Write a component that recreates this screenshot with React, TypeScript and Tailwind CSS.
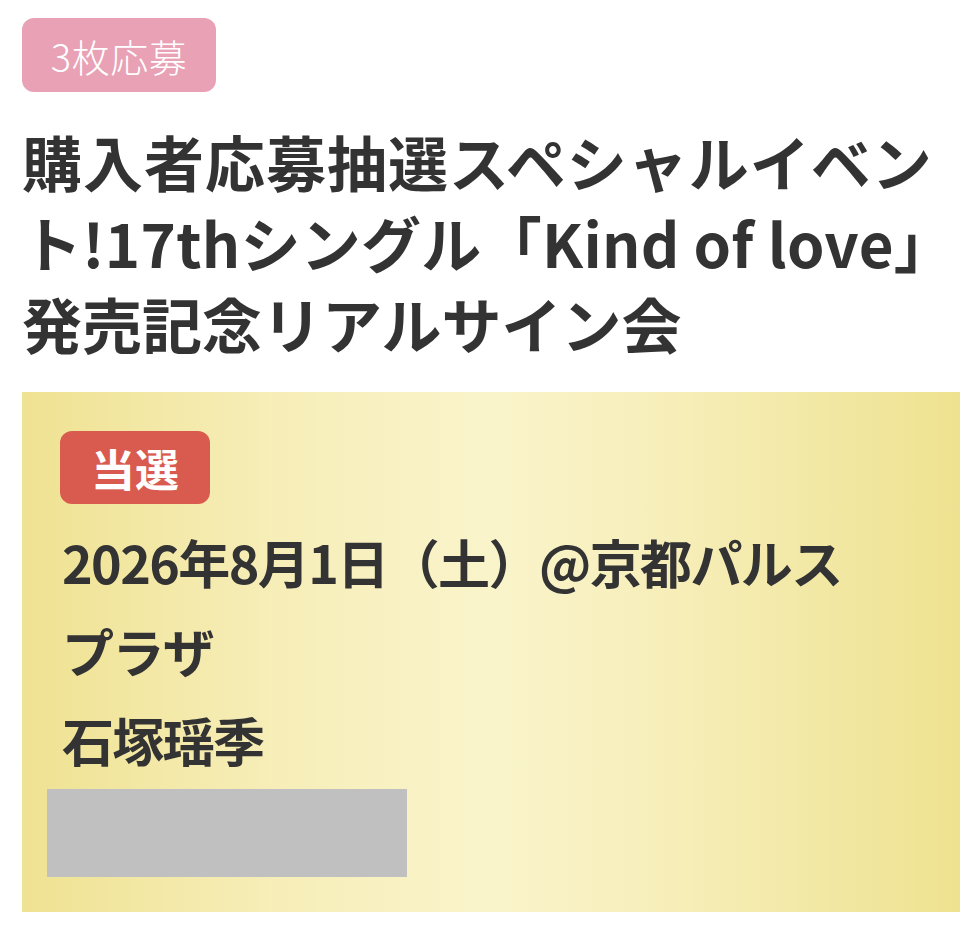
import React from "react";

export default function App() {
  const font = {
    fontFamily: '"Noto Sans CJK JP", "Noto Sans", sans-serif',
  };
  return (
    <div className="w-[979px] h-[932px] bg-white overflow-hidden" style={font}>
      <div className="pl-[22px] pt-[18px]">
        <div className="flex items-center justify-center w-[194px] h-[74px] rounded-[12px] bg-[#e8a1b5] text-white text-[38px] font-light tracking-[0.5px]">
          3枚応募
        </div>
      </div>
      <h1 className="pl-[22px] mt-[28px] text-[#333333] text-[60px] font-bold leading-[81px] tracking-[1px]">
        <span className="block whitespace-nowrap">購入者応募抽選スペシャルイベン</span>
        <span className="block whitespace-nowrap tracking-[0.3px]">ト!17thシングル「Kind of love」</span>
        <span className="block whitespace-nowrap tracking-[0px]">発売記念リアルサイン会</span>
      </h1>
      <div className="mx-[22px] mt-[29px] w-[938px] h-[520px] pt-[39px] pl-[40px] bg-[linear-gradient(90deg,#efe292_0%,#f6edb6_25%,#faf4cb_50%,#f6edb6_72%,#eee290_100%)]">
        <div className="-ml-[2px] flex items-center justify-center w-[150px] h-[73px] rounded-[12px] bg-[#d95a4f] text-white text-[44px] font-bold">
          当選
        </div>
        <div className="mt-[13px] text-[#333333] text-[52px] font-bold leading-[89px] tracking-[-1.6px]">
          <div className="whitespace-nowrap">2026年8月1日（土）@京都パルス</div>
          <div>プラザ</div>
          <div>石塚瑶季</div>
        </div>
        <div className="mt-[5px] -ml-[15px] w-[360px] h-[88px] bg-[#c0c0c0]" />
      </div>
    </div>
  );
}
